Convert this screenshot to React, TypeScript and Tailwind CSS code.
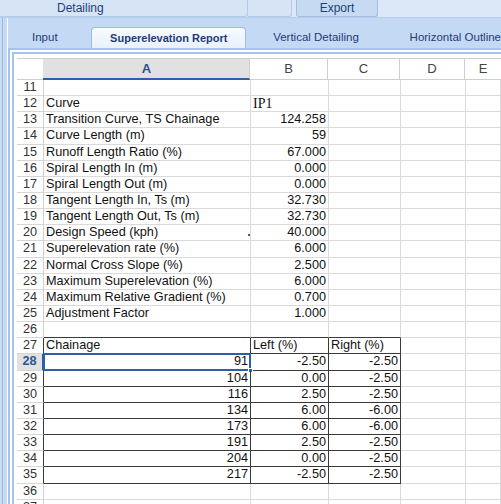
import React from "react";

const cellFont = { fontFamily: '"Liberation Sans", Arial, sans-serif' };

type Row = {
  n: number;
  a?: string;
  aRight?: boolean;
  b?: string;
  bSerif?: boolean;
  c?: string;
  table?: boolean;
  topOfTable?: boolean;
  selected?: boolean;
  dot?: boolean;
};

const rows: Row[] = [
  { n: 11 },
  { n: 12, a: "Curve", b: "IP1", bSerif: true },
  { n: 13, a: "Transition Curve, TS Chainage", b: "124.258" },
  { n: 14, a: "Curve Length (m)", b: "59" },
  { n: 15, a: "Runoff Length Ratio (%)", b: "67.000" },
  { n: 16, a: "Spiral Length In (m)", b: "0.000" },
  { n: 17, a: "Spiral Length Out (m)", b: "0.000" },
  { n: 18, a: "Tangent Length In, Ts (m)", b: "32.730" },
  { n: 19, a: "Tangent Length Out, Ts (m)", b: "32.730" },
  { n: 20, a: "Design Speed (kph)", b: "40.000", dot: true },
  { n: 21, a: "Superelevation rate (%)", b: "6.000" },
  { n: 22, a: "Normal Cross Slope (%)", b: "2.500" },
  { n: 23, a: "Maximum Superelevation (%)", b: "6.000" },
  { n: 24, a: "Maximum Relative Gradient (%)", b: "0.700" },
  { n: 25, a: "Adjustment Factor", b: "1.000" },
  { n: 26, topOfTable: true },
  { n: 27, a: "Chainage", b: "Left (%)", c: "Right (%)", table: true },
  { n: 28, a: "91", aRight: true, b: "-2.50", c: "-2.50", table: true, selected: true },
  { n: 29, a: "104", aRight: true, b: "0.00", c: "-2.50", table: true },
  { n: 30, a: "116", aRight: true, b: "2.50", c: "-2.50", table: true },
  { n: 31, a: "134", aRight: true, b: "6.00", c: "-6.00", table: true },
  { n: 32, a: "173", aRight: true, b: "6.00", c: "-6.00", table: true },
  { n: 33, a: "191", aRight: true, b: "2.50", c: "-2.50", table: true },
  { n: 34, a: "204", aRight: true, b: "0.00", c: "-2.50", table: true },
  { n: 35, a: "217", aRight: true, b: "-2.50", c: "-2.50", table: true },
  { n: 36 },
  { n: 37 },
];

function SheetRow({ r }: { r: Row }) {
  const t = r.table;
  const top = r.topOfTable;
  const bLeft = r.n === 27 || r.bSerif;
  return (
    <div className="flex h-[16.15px] shrink-0 text-[12.7px] leading-[15px] text-[#111]" style={cellFont}>
      <div
        className={
          "w-[27px] shrink-0 border-b border-[#d6d6d6] flex items-center justify-center " +
          (r.selected
            ? "bg-[#e1e1e1] text-[#2b5797] font-bold border-r-2 border-r-[#2f5ea8]"
            : t
            ? "bg-white text-[#333] border-r border-r-[#3a3a3a]"
            : "bg-white text-[#333] border-r border-r-[#cfcfcf]")
        }
      >
        {r.n}
      </div>
      <div
        className={
          "relative w-[207px] shrink-0 border-r border-b px-[2px] flex items-center whitespace-nowrap " +
          (r.aRight ? "justify-end " : "") +
          (t ? "border-[#3a3a3a]" : top ? "border-r-[#dadada] border-b-[#3a3a3a]" : "border-[#dadada]")
        }
      >
        {r.a}
        {r.selected && (
          <div className="absolute -top-[1px] -left-[1px] -right-[1px] -bottom-[1px] border-2 border-[#2f5ea8]">
            <div className="absolute -right-[4px] -bottom-[4px] w-[5px] h-[5px] bg-[#2f5ea8] border border-white" />
          </div>
        )}
        {r.dot && <div className="absolute right-[0px] bottom-[4px] w-[2px] h-[2px] bg-[#2f5ea8]" />}
      </div>
      <div
        className={
          "w-[78px] shrink-0 border-r border-b px-[2px] flex items-center whitespace-nowrap " +
          (bLeft ? "justify-start " : "justify-end ") +
          (t ? "border-[#3a3a3a]" : top ? "border-r-[#dadada] border-b-[#3a3a3a]" : "border-[#dadada]")
        }
        style={r.bSerif ? { fontFamily: '"Liberation Serif", "Times New Roman", serif', fontSize: "14px" } : undefined}
      >
        {r.b}
      </div>
      <div
        className={
          "w-[72px] shrink-0 border-r border-b px-[2px] flex items-center whitespace-nowrap " +
          (r.n === 27 ? "justify-start " : "justify-end ") +
          (t ? "border-[#3a3a3a]" : top ? "border-r-[#dadada] border-b-[#3a3a3a]" : "border-[#dadada]")
        }
      >
        {r.c}
      </div>
      <div className="w-[65px] shrink-0 border-r border-b border-[#dadada]" />
      <div className="flex-1 border-r border-b border-[#dadada]" />
    </div>
  );
}

export default function App() {
  const uiFont = { fontFamily: '"Liberation Sans", Arial, sans-serif' };
  return (
    <div className="w-[501px] h-[504px] overflow-hidden bg-[#c6dbf4] flex flex-col" style={uiFont}>
      {/* top button bar */}
      <div className="h-[18px] shrink-0 flex bg-[#dce8f7] border-b border-[#b6cdec] text-[12px] text-[#1f3f7c]">
        <div className="w-[248px] h-[17px] bg-[#d6e4f6] border-r border-b border-[#b3cbeb] rounded-br-[3px] flex items-center pl-[57px]">
          Detailing
        </div>
        <div className="w-[44px] h-[17px] bg-[#d6e4f6] border-r border-b border-[#b3cbeb] rounded-br-[3px]" />
        <div className="ml-[4px] w-[82px] h-[17px] bg-[#c6daf2] border-l border-r border-b border-[#a4bfe3] rounded-b-[3px] flex items-center justify-center">
          Export
        </div>
        <div className="flex-1" />
      </div>

      <div className="flex flex-1 min-h-0">
        {/* left strip */}
        <div className="w-[7px] shrink-0 flex">
          <div className="w-[2px] bg-[#c9ddf5]" />
          <div className="w-[1px] bg-[#9ab5d8]" />
          <div className="w-[4px] bg-[#c6dbf4]" />
        </div>

        <div className="flex-1 min-w-0 flex flex-col border-l border-white">
          {/* tab row */}
          <div className="h-[30px] shrink-0 flex items-end text-[11.5px] text-[#1e3c78] whitespace-nowrap bg-[#c4d9f4]">
            <div className="w-[84px] h-[21px] flex items-center pl-[24px]">Input</div>
            <div className="w-[157px] h-[21px] bg-gradient-to-b from-[#f7faff] to-[#e9f1fb] border-t border-l border-r border-[#9dbbe4] rounded-t-[4px] flex items-center justify-center font-bold text-[11px]">
              Superelevation Report
            </div>
            <div className="w-[141px] h-[21px] flex items-center justify-center">Vertical Detailing</div>
            <div className="h-[21px] flex items-center pl-[24px]">Horizontal Outline</div>
          </div>

          {/* sheet frame */}
          <div className="flex-1 min-h-0 border-t-2 border-l-2 border-[#a7c3ea] bg-white pt-[2px] pl-[2px] flex flex-col">
            <div className="flex-1 min-h-0 border-t-2 border-l-2 border-[#a7c3ea] bg-white pt-[4px] pl-[3px] flex flex-col overflow-hidden">
              {/* column header */}
              <div className="flex h-[22px] shrink-0 border-t border-[#cfcfcf] text-[13px]" style={uiFont}>
                <div className="w-[27px] shrink-0 bg-white border-r border-b border-[#cfcfcf]" />
                <div className="w-[207px] shrink-0 bg-[#e1e1e1] border-r border-r-[#cfcfcf] border-b-2 border-b-[#2f5ea8] flex items-center justify-center font-bold text-[#2a4f8c] -ml-[1px] pl-[1px]">
                  A
                </div>
                <div className="w-[78px] shrink-0 bg-white border-r border-b border-[#cfcfcf] flex items-center justify-center text-[#444]">
                  B
                </div>
                <div className="w-[72px] shrink-0 bg-white border-r border-b border-[#cfcfcf] flex items-center justify-center text-[#444]">
                  C
                </div>
                <div className="w-[65px] shrink-0 bg-white border-r border-b border-[#cfcfcf] flex items-center justify-center text-[#444]">
                  D
                </div>
                <div className="flex-1 bg-white border-b border-[#cfcfcf] flex items-center justify-center text-[#444]">
                  E
                </div>
              </div>
              {rows.map((r) => (
                <SheetRow key={r.n} r={r} />
              ))}
            </div>
          </div>
        </div>
      </div>
    </div>
  );
}
